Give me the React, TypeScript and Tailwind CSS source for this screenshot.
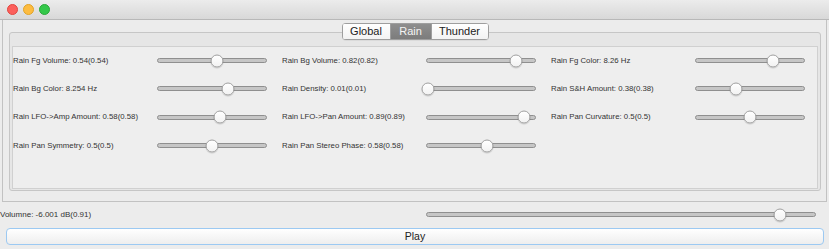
import React from 'react';

type Param = { label: string; value: number };

const rows: Param[][] = [
  [
    { label: 'Rain Fg Volume: 0.54(0.54)', value: 0.55 },
    { label: 'Rain Bg Volume: 0.82(0.82)', value: 0.82 },
    { label: 'Rain Fg Color: 8.26 Hz', value: 0.71 },
  ],
  [
    { label: 'Rain Bg Color: 8.254 Hz', value: 0.65 },
    { label: 'Rain Density: 0.01(0.01)', value: 0.01 },
    { label: 'Rain S&H Amount: 0.38(0.38)', value: 0.37 },
  ],
  [
    { label: 'Rain LFO->Amp Amount: 0.58(0.58)', value: 0.57 },
    { label: 'Rain LFO->Pan Amount: 0.89(0.89)', value: 0.9 },
    { label: 'Rain Pan Curvature: 0.5(0.5)', value: 0.5 },
  ],
  [
    { label: 'Rain Pan Symmetry: 0.5(0.5)', value: 0.5 },
    { label: 'Rain Pan Stereo Phase: 0.58(0.58)', value: 0.56 },
  ],
];

const rowHeights = ['h-[27px]', 'h-[29px]', 'h-[28px]', 'h-[29px]'];

const Slider = ({ value, className }: { value: number; className: string }) => (
  <div className={`relative h-[5px] rounded-full border border-[#8f8f8f] bg-[#c6c6c6] ${className}`}>
    <div
      className="absolute top-1/2 h-[13px] w-[13px] -translate-x-1/2 -translate-y-1/2 rounded-full border border-[#a2a2a2] bg-gradient-to-b from-white to-[#f2f2f2] shadow-[0_1px_1px_rgba(0,0,0,0.15)]"
      style={{ left: `${value * 100}%` }}
    />
  </div>
);

const Tab = ({ label, selected }: { label: string; selected?: boolean }) => (
  <div
    className={`flex h-[17px] items-center justify-center border-y border-[#9e9e9e] text-[11px] leading-none ${
      selected
        ? 'bg-gradient-to-b from-[#8e8e8e] to-[#7c7c7c] text-[#f4f4f4]'
        : 'bg-gradient-to-b from-white to-[#f3f3f3] text-[#222]'
    }`}
  >
    {label}
  </div>
);

export default function App() {
  return (
    <div className="h-[249px] w-[829px] overflow-hidden bg-[#ececec] font-['Liberation_Sans',sans-serif]">
      {/* title bar */}
      <div className="flex h-[20px] items-center gap-[5px] border-b border-[#b8b8b8] bg-gradient-to-b from-[#ececec] to-[#d8d8d8] pl-[7px]">
        <span className="h-[11px] w-[11px] rounded-full border border-[#e2463f] bg-[#fc605c]" />
        <span className="h-[11px] w-[11px] rounded-full border border-[#e1a325] bg-[#fdbc40]" />
        <span className="h-[11px] w-[11px] rounded-full border border-[#2aa838] bg-[#34c84a]" />
      </div>

      {/* tabbed area */}
      <div className="ml-[2px] mr-[2px] h-[182px] border-b border-l border-r border-[#c2c2c2] pl-[6px] pr-[5px] pt-[12px]">
        <div className="flex h-[159px] flex-col rounded-[3px] border border-[#c6c6c6] bg-[#e6e6e6] px-[2px] pb-[1px]">
          <div className="-mt-[10px] flex justify-center">
            <div className="flex overflow-hidden rounded-[4px] border-x border-[#9e9e9e] shadow-[0_1px_0_rgba(0,0,0,0.05)]">
              <div className="w-[48px] border-r border-[#9e9e9e]">
                <Tab label="Global" />
              </div>
              <div className="w-[41px] border-r border-[#9e9e9e]">
                <Tab label="Rain" selected />
              </div>
              <div className="w-[56px]">
                <Tab label="Thunder" />
              </div>
            </div>
          </div>
          <div className="mt-[6px] flex-1 border border-[#d0d0d0] bg-[#eeeeee]">
            {rows.map((row, r) => (
              <div key={r} className={`grid grid-cols-[269px_269px_269px] ${rowHeights[r]}`}>
                {row.map((p) => (
                  <div key={p.label} className="flex items-center">
                    <span className="w-[144px] whitespace-nowrap text-[7.8px] text-[#333]">{p.label}</span>
                    <Slider value={p.value} className="w-[110px]" />
                  </div>
                ))}
              </div>
            ))}
          </div>
        </div>
      </div>

      {/* volume */}
      <div className="flex h-[25px] items-center">
        <span className="w-[426px] whitespace-nowrap text-[8px] text-[#333]">Volumne: -6.001 dB(0.91)</span>
        <Slider value={0.91} className="w-[390px]" />
      </div>

      <button
        type="button"
        className="ml-[6px] mt-[1px] flex h-[17px] w-[818px] items-center justify-center rounded-[4px] border border-[#9cc9f2] bg-gradient-to-b from-white to-[#eeeeee] text-[10.5px] text-[#222]"
      >
        Play
      </button>
    </div>
  );
}
